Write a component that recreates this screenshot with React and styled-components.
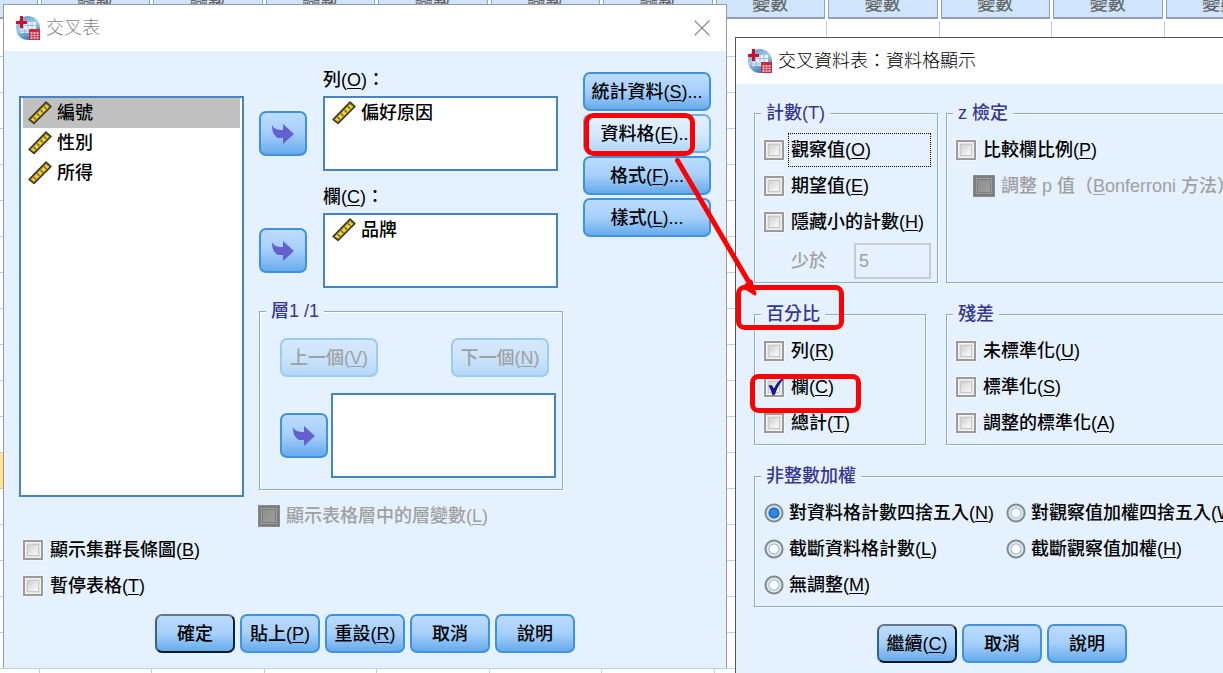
import React from "react";
import styled, { createGlobalStyle, css } from "styled-components";

const COLUMNS = Array.from({ length: 12 }, (_, i) => i);
const ROWS = Array.from({ length: 19 }, (_, i) => i);
const ACTIVE_ROW = 12;

const AppIcon = () => (
  <svg width="24" height="24" viewBox="0 0 24 24" aria-hidden="true">
    <defs>
      <linearGradient id="globe" x1="0.2" y1="0" x2="0.6" y2="1">
        <stop offset="0" stopColor="#5e9bc9" />
        <stop offset="0.45" stopColor="#a9cde8" />
        <stop offset="1" stopColor="#2f78b4" />
      </linearGradient>
    </defs>
    <circle cx="12" cy="12" r="12" fill="url(#globe)" />
    <path d="M8 6h12v7H8z" fill="#e8f2fa" />
    <path d="M4 13h9v4H4z" fill="#d4e6f4" />
    <path d="M8 9.500h12M12 6v7M16 6v7M4 15h9M8.500 13v4" stroke="#86b5da" strokeWidth="0.800" />
    <path d="M0 5h11v3H0zM4 0h3v12H4z" fill="#c8102e" />
    <path d="M13 13h11v11H13z" fill="#c92a45" />
    <path d="M14.500 17h8.500M14.500 19.500h8.500M14.500 22h8.500" stroke="#f8dfe3" strokeWidth="1.500" strokeDasharray="2 1" />
  </svg>
);

const RulerIcon = () => (
  <svg width="24" height="24" viewBox="0 0 24 24" aria-hidden="true">
    <path d="M1 18.500L18 1L23 5.500L6 22.500Z" fill="#8d8230" stroke="#33331f" strokeWidth="1.400" strokeLinejoin="round" />
    <path d="M3 18.500L18 3.500L21 6L6 20.500Z" fill="#f6cf34" />
    <path d="M5.500 16L8 18.500M9 12.500L11.500 15M12.500 9L15 11.500M16 5.500L18.500 8" stroke="#6b5c1c" strokeWidth="1.200" />
  </svg>
);

const ArrowIcon = () => (
  <svg width="22" height="20" viewBox="0 0 22 20" aria-hidden="true">
    <path d="M0 1C2 5 5 6 11 6V0L22 10L11 20V14H6C2 12 0 8 0 1Z" fill="#6461cf" />
  </svg>
);

const CloseIcon = () => (
  <svg width="16" height="16" viewBox="0 0 16 16" aria-hidden="true">
    <path d="M0.500 0.500l15 15M15.500 0.500l-15 15" stroke="#888" strokeWidth="1.100" />
  </svg>
);

const CheckBox = ({ id, label, hotkey, after = ")", checked, disabled, focused, indent }) => (
  <Option $disabled={disabled} $indent={indent}>
    <BoxWrap>
      <Box id={id} type="checkbox" defaultChecked={checked} disabled={disabled} />
      {checked && (
        <Tick width="20" height="20" viewBox="0 0 20 20" aria-hidden="true">
          <path d="M4.500 8.500L7.500 8L10 11.500C12 7 14.500 4 18 1.500L19.500 2C15.500 6.500 13 11 11 17.500L8.500 18.500C7.500 14.500 6 11 4.500 8.500Z" fill="#15158c" />
        </Tick>
      )}
    </BoxWrap>
    <OptionLabel htmlFor={id} $focused={focused}>
      {label}
      <u>{hotkey}</u>
      {after}
    </OptionLabel>
  </Option>
);

const RadioButton = ({ id, label, hotkey, checked }) => (
  <Option>
    <Radio id={id} type="radio" name="weight" defaultChecked={checked} />
    <RadioLabel htmlFor={id}>
      {label}(<u>{hotkey}</u>)
    </RadioLabel>
  </Option>
);

const Variable = ({ name, selected }) => (
  <VariableItem role="option" aria-selected={!!selected} $selected={selected}>
    <RulerIcon />
    {name}
  </VariableItem>
);

const CrosstabsDialog = () => (
  <MainWindow aria-label="交叉表">
    <TitleBar $inactive>
      <AppIcon />
      <Title>交叉表</Title>
      <CloseButton aria-label="關閉">
        <CloseIcon />
      </CloseButton>
    </TitleBar>
    <MainBody>
      <MainColumns>
        <SourceColumn>
          <SourceList role="listbox" aria-label="變數">
            <Variable name="編號" selected />
            <Variable name="性別" />
            <Variable name="所得" />
          </SourceList>
          <SourceOptions>
            <CheckBox id="bar" label="顯示集群長條圖(" hotkey="B" />
            <CheckBox id="suppress" label="暫停表格(" hotkey="T" />
          </SourceOptions>
        </SourceColumn>
        <TargetColumn>
          <Targets>
            <Target>
              <TargetLabel>
                列(<u>O</u>)：
              </TargetLabel>
              <MoveButton aria-label="移至列">
                <ArrowIcon />
              </MoveButton>
              <TargetList role="listbox" aria-label="列">
                <Variable name="偏好原因" />
              </TargetList>
            </Target>
            <Target>
              <TargetLabel>
                欄(<u>C</u>)：
              </TargetLabel>
              <MoveButton aria-label="移至欄">
                <ArrowIcon />
              </MoveButton>
              <TargetList role="listbox" aria-label="欄">
                <Variable name="品牌" />
              </TargetList>
            </Target>
          </Targets>
          <Group>
            <Legend>層1 /1</Legend>
            <LayerContent>
              <LayerNav>
                <LayerButton disabled>
                  上一個(<u>V</u>)
                </LayerButton>
                <LayerButton disabled>
                  下一個(<u>N</u>)
                </LayerButton>
              </LayerNav>
              <LayerTarget>
                <MoveButton aria-label="移至層">
                  <ArrowIcon />
                </MoveButton>
                <LayerList role="listbox" aria-label="層" />
              </LayerTarget>
            </LayerContent>
          </Group>
          <LayerOption>
            <CheckBox id="layer" label="顯示表格層中的層變數(" hotkey="L" disabled />
          </LayerOption>
        </TargetColumn>
        <SideButtons>
          <Button>
            統計資料(<u>S</u>)...
          </Button>
          <Button $hover>
            資料格(<u>E</u>)...
          </Button>
          <Button>
            格式(<u>F</u>)...
          </Button>
          <Button>
            樣式(<u>L</u>)...
          </Button>
        </SideButtons>
      </MainColumns>
      <MainActions>
        <ActionButton $primary>確定</ActionButton>
        <ActionButton>
          貼上(<u>P</u>)
        </ActionButton>
        <ActionButton>
          重設(<u>R</u>)
        </ActionButton>
        <ActionButton>取消</ActionButton>
        <ActionButton>說明</ActionButton>
      </MainActions>
    </MainBody>
  </MainWindow>
);

const CellDisplayDialog = () => (
  <CellWindow aria-label="交叉資料表：資料格顯示">
    <TitleBar>
      <AppIcon />
      <Title>交叉資料表：資料格顯示</Title>
    </TitleBar>
    <CellBody>
      <CellGrid>
        <Group>
          <Legend>計數(T)</Legend>
          <GroupContent>
            <CheckBox id="observed" label="觀察值(" hotkey="O" focused />
            <CheckBox id="expected" label="期望值(" hotkey="E" />
            <CheckBox id="hide" label="隱藏小的計數(" hotkey="H" />
            <LessThan>
              <label htmlFor="less">少於</label>
              <NumberInput id="less" defaultValue="5" disabled />
            </LessThan>
          </GroupContent>
        </Group>
        <Group>
          <Legend>z 檢定</Legend>
          <GroupContent>
            <CheckBox id="compare" label="比較欄比例(" hotkey="P" />
            <CheckBox id="adjust" label="調整 p 值（" hotkey="B" after="onferroni 方法）" disabled indent />
          </GroupContent>
        </Group>
        <PercentGroup>
          <Legend>百分比</Legend>
          <GroupContent>
            <CheckBox id="rowPct" label="列(" hotkey="R" />
            <CheckBox id="colPct" label="欄(" hotkey="C" checked />
            <CheckBox id="totalPct" label="總計(" hotkey="T" />
          </GroupContent>
        </PercentGroup>
        <Group>
          <Legend>殘差</Legend>
          <GroupContent>
            <CheckBox id="unstd" label="未標準化(" hotkey="U" />
            <CheckBox id="std" label="標準化(" hotkey="S" />
            <CheckBox id="adjstd" label="調整的標準化(" hotkey="A" />
          </GroupContent>
        </Group>
        <WideGroup>
          <Legend>非整數加權</Legend>
          <RadioGrid>
            <RadioButton id="roundCell" label="對資料格計數四捨五入" hotkey="N" checked />
            <RadioButton id="roundCase" label="對觀察值加權四捨五入" hotkey="W" />
            <RadioButton id="truncCell" label="截斷資料格計數" hotkey="L" />
            <RadioButton id="truncCase" label="截斷觀察值加權" hotkey="H" />
            <RadioButton id="none" label="無調整" hotkey="M" />
          </RadioGrid>
        </WideGroup>
      </CellGrid>
      <Actions>
        <ActionButton $primary>
          繼續(<u>C</u>)
        </ActionButton>
        <ActionButton>取消</ActionButton>
        <ActionButton>說明</ActionButton>
      </Actions>
    </CellBody>
  </CellWindow>
);

const App = () => {
  return (
    <Desktop>
      <GlobalStyle />
      <Sheet aria-hidden="true">
        <SheetRow>
          {COLUMNS.map((col) => (
            <HeaderCell key={col}>{col > 0 && "變數"}</HeaderCell>
          ))}
        </SheetRow>
        {ROWS.map((row) => (
          <SheetRow key={row}>
            {COLUMNS.map((col) => (
              <Cell key={col} $active={row === ACTIVE_ROW && col === 0} />
            ))}
          </SheetRow>
        ))}
      </Sheet>
      <CrosstabsDialog />
      <CellDisplayDialog />
      <Markup width="1223" height="673" viewBox="0 0 1223 673" aria-hidden="true">
        <rect x="586.500" y="115.500" width="106" height="38" rx="7" />
        <rect x="738.500" y="287.500" width="103" height="40" rx="6" />
        <rect x="752.500" y="376.500" width="106" height="34" rx="6" />
        <path d="M677.500 160.500L750 284" />
        <path d="M744 287L751 281L755 294Z" strokeWidth="3" strokeLinejoin="round" fill="#f00" />
      </Markup>
    </Desktop>
  );
};

export default App;

// Styled Components
const GlobalStyle = createGlobalStyle`
  * {
    box-sizing: border-box;
  }

  body {
    margin: 0;
    font-family: "Liberation Sans", "Noto Sans CJK TC", sans-serif;
    font-size: 18px;
    font-weight: 500;
    line-height: 20px;
    color: #000000;
  }

  button, input {
    font: inherit;
    color: inherit;
  }

  u {
    text-underline-offset: 2px;
    text-decoration-thickness: 1px;
  }
`;

const Desktop = styled.main`
  position: relative;
  height: 100vh;
  overflow: hidden;
  background: #ffffff;
`;

const Sheet = styled.div`
  width: 1350px;
  margin: -10px 0 0 -73px;
`;

const SheetRow = styled.div`
  display: grid;
  grid-template-columns: repeat(12, 1fr);
`;

const HeaderCell = styled.div`
  display: flex;
  align-items: center;
  justify-content: center;
  height: 29px;
  margin: 0 2px 2px 1px;
  background: #d0e4fb;
  border: 1px solid #8fa3b8;
  border-bottom-width: 2px;
  color: #666666;
`;

const Cell = styled.div`
  height: 36px;
  background: ${({ $active }) => ($active ? "#ffe48a" : "#ffffff")};
  border-right: 1px solid #b4d2ec;
  border-bottom: 1px solid #b4d2ec;
`;

const Window = styled.section`
  position: absolute;
  background: #e5f1fe;
`;

const MainWindow = styled(Window)`
  left: 3px;
  top: 4px;
  width: 724px;
  border: 1px solid #999999;
  border-bottom: none;
`;

const CellWindow = styled(Window)`
  left: 735px;
  top: 37px;
  width: 534px;
  border: 1px solid #555555;
`;

const TitleBar = styled.header`
  display: flex;
  align-items: center;
  gap: 6px;
  height: 46px;
  padding: 0 16px 0 12px;
  background: #ffffff;
  color: ${({ $inactive }) => ($inactive ? "#888888" : "#000000")};
`;

const Title = styled.h1`
  flex: 1;
  margin: 0;
  font-size: 18px;
  font-weight: 300;
`;

const CloseButton = styled.button`
  display: flex;
  padding: 0;
  border: none;
  background: none;
`;

const MainBody = styled.div`
  padding: 19px 15px 15px;
`;

const MainColumns = styled.div`
  display: flex;
  align-items: flex-start;
`;

const SourceColumn = styled.div`
  width: 225px;
  padding-top: 26px;
`;

const List = styled.ul`
  margin: 0;
  padding: 0 2px;
  list-style: none;
  background: #ffffff;
  border: 2px solid #4585c6;
`;

const SourceList = styled(List)`
  height: 401px;
`;

const TargetList = styled(List)`
  height: 75px;
`;

const LayerList = styled(List)`
  flex: 1;
  height: 85px;
`;

const VariableItem = styled.li`
  display: flex;
  align-items: center;
  gap: 5px;
  height: 30px;
  padding: 0 5px;
  background: ${({ $selected }) => ($selected ? "#c0c0c0" : "transparent")};
`;

const SourceOptions = styled.div`
  padding: 35px 0 0 4px;
`;

const Option = styled.div`
  display: flex;
  align-items: center;
  height: 36px;
  padding-left: ${({ $indent }) => ($indent ? "18px" : "0")};
  white-space: nowrap;
  color: ${({ $disabled }) => ($disabled ? "#a0a0a0" : "inherit")};
`;

const BoxWrap = styled.span`
  position: relative;
  display: flex;
`;

const Box = styled.input`
  appearance: none;
  width: 20px;
  height: 20px;
  margin: 0;
  border: 2px solid #9b9b9b;
  background: linear-gradient(135deg, #d2d2d2 20%, #fafafa 80%);
  box-shadow: 0 0 0 1px #f4f8fc, inset 0 0 0 1px #f2f2f2, inset 0 0 0 2px #e4e4e4, inset 0 0 0 3px #c9c9c9;

  &:disabled {
    border-color: #7d7d7d;
    background: linear-gradient(135deg, #8a8a8a, #a2a2a2);
    box-shadow: 0 0 0 1px #8a8a8a, inset 0 0 0 1px #9d9d9d, inset 0 0 0 2px #7d7d7d;
  }
`;

const Tick = styled.svg`
  position: absolute;
  inset: 0;
  pointer-events: none;
`;

const OptionLabel = styled.label`
  margin-left: 4px;
  padding: 0 0 0 2px;
  border: 1px solid transparent;
  ${({ $focused }) =>
    $focused &&
    css`
      flex: 1;
      padding: 6px 0 6px 2px;
      border: 1px dotted #000000;
    `}
`;

const Radio = styled.input`
  appearance: none;
  width: 20px;
  height: 20px;
  margin: 0;
  border-radius: 50%;
  background: radial-gradient(circle, #ffffff 4px, #8fb3d3 5px, #e8eef3 6px, #d8e2e8 7px, #7d8b8b 8px, #7d8b8b 9px, transparent 10px);

  &:checked {
    background: radial-gradient(circle, #2f8be0 3px, #1d66b8 5px, #d5e3f0 6px, #d8e2e8 7px, #7d8b8b 8px, #7d8b8b 9px, transparent 10px);
  }
`;

const RadioLabel = styled.label`
  margin-left: 5px;
`;

const TargetColumn = styled.div`
  flex: 1;
  margin: 0 20px 0 15px;
`;

const Targets = styled.div`
  display: flex;
  flex-direction: column;
  gap: 16px;
  padding: 0 5px 13px 0;
`;

const Target = styled.div`
  display: grid;
  grid-template-columns: 48px 1fr;
  gap: 6px 16px;
  align-items: center;
`;

const TargetLabel = styled.div`
  grid-column: 2;
`;

const buttonFace = css`
  display: flex;
  align-items: center;
  justify-content: center;
  padding: 0;
  border: 2px solid #3f92de;
  border-radius: 7px;
  background: linear-gradient(#bcdcff, #a5cffa 50%, #67abeb);
  white-space: pre;
`;

const MoveButton = styled.button`
  ${buttonFace}
  width: 48px;
  height: 45px;
`;

const Button = styled.button`
  ${buttonFace}
  width: 100%;
  height: 39px;
  ${({ $hover }) =>
    $hover &&
    css`
      border-color: #6bb1f0;
      background: linear-gradient(#e2f1ff, #d6eaff 50%, #b0d8fb);
    `}
`;

const LayerButton = styled(Button)`
  width: 98px;
  border-color: #9ccbf2;
  background: linear-gradient(#d6e9fd, #cbe3fb 50%, #b4d8f8);
  color: #a0a0a0;
`;

const ActionButton = styled(Button)`
  width: 80px;
  ${({ $primary }) =>
    $primary &&
    css`
      border-color: #667788 #0d2238 #0d1a28 #3d6186;
    `}
`;

const SideButtons = styled.div`
  display: flex;
  flex-direction: column;
  gap: 3px;
  width: 128px;
  padding-top: 2px;
`;

const Group = styled.fieldset`
  min-width: 0;
  margin: 0;
  padding: 0 6px 3px;
  border: 1px solid #86aed4;
  box-shadow: inset 1px 1px 0 #ffffff, 1px 1px 0 #ffffff;
`;

const PercentGroup = styled(Group)`
  margin-right: 12px;
`;

const WideGroup = styled(Group)`
  grid-column: 1 / -1;
`;

const Legend = styled.legend`
  padding: 0 5px;
  background: #e5f1fe;
  color: #36368f;
`;

const LayerContent = styled.div`
  padding: 17px 0 8px 14px;
`;

const LayerNav = styled.div`
  display: flex;
  justify-content: space-between;
  padding-right: 7px;
  margin-bottom: 16px;
`;

const LayerTarget = styled.div`
  display: flex;
  align-items: center;
  gap: 3px;
`;

const LayerOption = styled.div`
  padding-top: 8px;
`;

const Actions = styled.footer`
  display: flex;
  justify-content: center;
  gap: 5px;
  padding-top: 17px;
`;

const MainActions = styled(Actions)`
  padding-top: 10px;
`;

const CellBody = styled.div`
  padding: 19px 18px;
`;

const CellGrid = styled.div`
  display: grid;
  grid-template-columns: 184px 1fr;
  gap: 21px 8px;
`;

const GroupContent = styled.div`
  padding: 9px 0 0 3px;
`;

const RadioGrid = styled(GroupContent)`
  display: grid;
  grid-template-columns: 242px 1fr;
`;

const LessThan = styled.div`
  display: flex;
  align-items: center;
  justify-content: space-between;
  padding: 3px 0 0 27px;
  color: #a0a0a0;
`;

const NumberInput = styled.input`
  width: 77px;
  height: 36px;
  padding: 0 3px;
  border: 2px solid #c8ccd0;
  background: #e5f1fe;
`;

const Markup = styled.svg`
  position: absolute;
  left: 0;
  top: 0;
  fill: none;
  stroke: #ff0000;
  stroke-width: 5;
  stroke-linecap: round;
  pointer-events: none;
`;
